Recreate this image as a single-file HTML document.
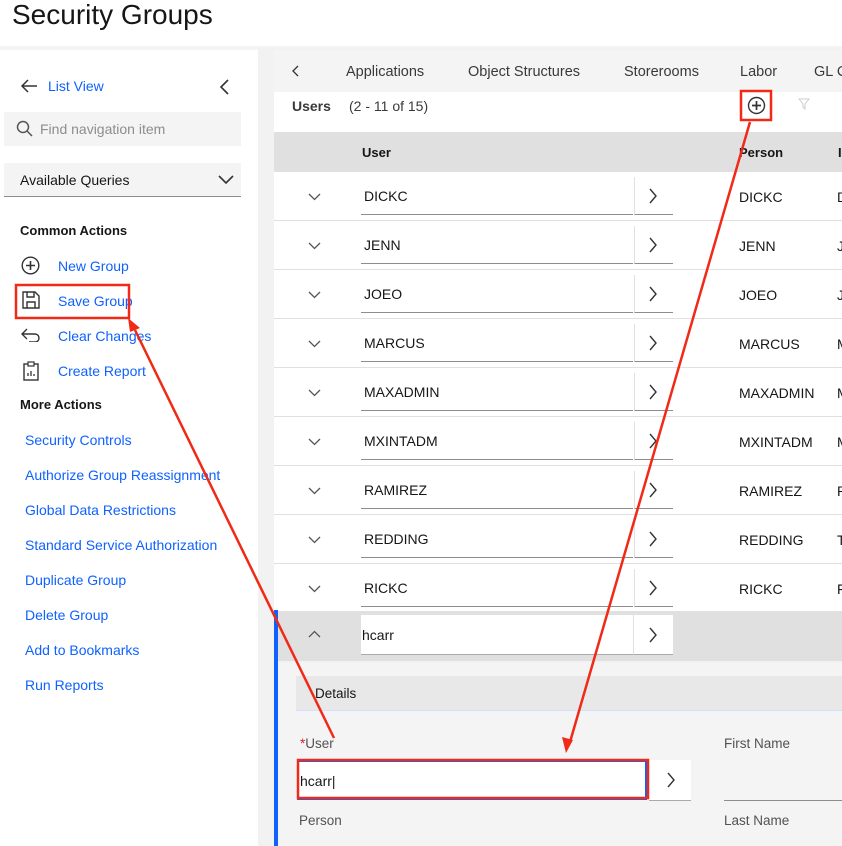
<!DOCTYPE html>
<html><head><meta charset="utf-8"><style>
*{margin:0;padding:0;box-sizing:border-box}
body{width:842px;height:846px;overflow:hidden;background:#fff;font-family:"Liberation Sans",sans-serif;position:relative;color:#161616}
.a{position:absolute;white-space:nowrap}
.lnk{color:#0f62fe;font-size:14px;position:absolute;white-space:nowrap}
.row{position:absolute;left:274px;width:568px;height:49px;background:#fff;border-bottom:1px solid #e0e0e0}
.row .chev{position:absolute;left:34px;top:21px}
.row .inp{position:absolute;left:87px;top:5px;width:272px;height:38px;border-bottom:1px solid #8d8d8d;font-size:14px;padding:11px 0 0 3px}
.row .btn{position:absolute;left:360px;top:5px;width:39px;height:38px;border-left:1px solid #e0e0e0;border-bottom:1px solid #8d8d8d}
.row .btn svg{position:absolute;left:13px;top:11px}
.row .p{position:absolute;left:465px;top:17px;font-size:14px}
.row .q{position:absolute;left:563px;top:17px;font-size:14px}
</style></head><body>
<div class="a" style="left:12px;top:-1px;font-size:28px;color:#161616">Security Groups</div>
<div class="a" style="left:0;top:46px;width:842px;height:4px;background:#f4f4f4"></div>
<div class="a" style="left:258px;top:48px;width:584px;height:798px;background:#f2f2f2"></div>
<svg class="a" style="left:20px;top:79px" width="18" height="14"><path d="M17 7H2M8 1L2 7l6 6" stroke="#333" stroke-width="1.5" fill="none"/></svg>
<div class="lnk" style="left:48px;top:78px">List View</div>
<svg class="a" style="left:219px;top:79px" width="12" height="16"><path d="M9 1L2 8l7 7" stroke="#333" stroke-width="1.6" fill="none"/></svg>
<div class="a" style="left:4px;top:112px;width:237px;height:34px;background:#f4f4f4"></div>
<svg class="a" style="left:16px;top:120px" width="18" height="18"><circle cx="7" cy="7" r="5.5" stroke="#555" stroke-width="1.5" fill="none"/><path d="M11 11l5 5" stroke="#555" stroke-width="1.5"/></svg>
<div class="a" style="left:40px;top:121px;font-size:14px;color:#8d8d8d">Find navigation item</div>
<div class="a" style="left:4px;top:163px;width:237px;height:34px;background:#f4f4f4;border-bottom:1px solid #8d8d8d"></div>
<div class="a" style="left:20px;top:172px;font-size:14px">Available Queries</div>
<svg class="a" style="left:218px;top:175px" width="16" height="10"><path d="M1 1l7 7 7-7" stroke="#333" stroke-width="1.6" fill="none"/></svg>
<div class="a" style="left:20px;top:223px;font-size:13px;font-weight:bold">Common Actions</div>
<svg class="a" style="left:21px;top:256px" width="19" height="19"><circle cx="9.5" cy="9.5" r="8.3" stroke="#333" stroke-width="1.4" fill="none"/><path d="M9.5 5v9M5 9.5h9" stroke="#333" stroke-width="1.6"/></svg>
<div class="lnk" style="left:58px;top:258px">New Group</div>
<svg class="a" style="left:22px;top:291px" width="18" height="18"><path d="M1 1h12l4 4v12H1z" stroke="#333" stroke-width="1.4" fill="none"/><path d="M5 1v5h7V1M5 17v-6h8v6" stroke="#333" stroke-width="1.4" fill="none"/></svg>
<div class="lnk" style="left:58px;top:293px">Save Group</div>
<svg class="a" style="left:21px;top:328px" width="20" height="14"><path d="M6 1L1 6l5 5M1 6h13a4 4 0 010 8H8" stroke="#333" stroke-width="1.4" fill="none"/></svg>
<div class="lnk" style="left:58px;top:328px">Clear Changes</div>
<svg class="a" style="left:23px;top:361px" width="16" height="20"><rect x="1" y="3" width="14" height="16" stroke="#333" stroke-width="1.4" fill="none"/><rect x="5" y="1" width="6" height="4" fill="#fff" stroke="#333" stroke-width="1.2"/><path d="M5 15v-3M8 15v-5M11 15v-2" stroke="#333" stroke-width="1.3"/></svg>
<div class="lnk" style="left:58px;top:363px">Create Report</div>
<div class="a" style="left:20px;top:397px;font-size:13px;font-weight:bold">More Actions</div>
<div class="lnk" style="left:25px;top:432px">Security Controls</div>
<div class="lnk" style="left:25px;top:467px">Authorize Group Reassignment</div>
<div class="lnk" style="left:25px;top:502px">Global Data Restrictions</div>
<div class="lnk" style="left:25px;top:537px">Standard Service Authorization</div>
<div class="lnk" style="left:25px;top:572px">Duplicate Group</div>
<div class="lnk" style="left:25px;top:607px">Delete Group</div>
<div class="lnk" style="left:25px;top:642px">Add to Bookmarks</div>
<div class="lnk" style="left:25px;top:677px">Run Reports</div>
<div class="a" style="left:274px;top:50px;width:568px;height:42px;background:#f4f4f4"></div>
<svg class="a" style="left:292px;top:65px" width="8" height="12"><path d="M6 1L1 6l5 5" stroke="#333" stroke-width="1.3" fill="none"/></svg>
<div class="a" style="left:346px;top:64px;font-size:14.5px;color:#393939">Applications</div>
<div class="a" style="left:468px;top:64px;font-size:14.5px;color:#393939">Object Structures</div>
<div class="a" style="left:624px;top:64px;font-size:14.5px;color:#393939">Storerooms</div>
<div class="a" style="left:740px;top:64px;font-size:14.5px;color:#393939">Labor</div>
<div class="a" style="left:814px;top:64px;font-size:14.5px;color:#393939">GL C</div>
<div class="a" style="left:274px;top:92px;width:568px;height:40px;background:#fff"></div>
<div class="a" style="left:292px;top:98px;font-size:14px;font-weight:bold;color:#393939">Users</div>
<div class="a" style="left:349px;top:98px;font-size:14px;color:#393939">(2 - 11 of 15)</div>
<svg class="a" style="left:747px;top:96px" width="19" height="19"><circle cx="9.5" cy="9.5" r="8" stroke="#333" stroke-width="1.4" fill="none"/><path d="M9.5 5v9M5 9.5h9" stroke="#333" stroke-width="1.7"/></svg>
<svg class="a" style="left:798px;top:98px" width="14" height="12"><path d="M1 1h10L7 6v5L5 9V6z" stroke="#ccc" fill="none"/></svg>
<div class="a" style="left:274px;top:132px;width:568px;height:40px;background:#e0e0e0"></div>
<div class="a" style="left:362px;top:145px;font-size:13px;font-weight:bold">User</div>
<div class="a" style="left:739px;top:145px;font-size:13px;font-weight:bold">Person</div>
<div class="a" style="left:838px;top:145px;font-size:13px;font-weight:bold">I</div>
<div id="rows"></div>
<div class="a" style="left:274px;top:611px;width:568px;height:50px;background:#e0e0e0"></div>
<svg class="a" style="left:308px;top:630px" width="13" height="8"><path d="M1 7l5.5-5.5L12 7" stroke="#555" stroke-width="1.3" fill="none"/></svg>
<div class="a" style="left:361px;top:615px;width:272px;height:40px;background:#fff;border-bottom:1px solid #aaa;font-size:14px;padding:12px 0 0 1px">hcarr</div>
<div class="a" style="left:633px;top:615px;width:40px;height:40px;background:#fff;border-left:1px solid #e0e0e0;border-bottom:1px solid #aaa"></div>
<svg class="a" style="left:648px;top:627px" width="10" height="16"><path d="M2 1l6 7-6 7" stroke="#333" stroke-width="1.4" fill="none"/></svg>
<div class="a" style="left:278px;top:663px;width:564px;height:183px;background:#f4f4f4"></div>
<div class="a" style="left:296px;top:676px;width:546px;height:35px;background:#e8e8e8;border-bottom:1px solid #d0e2ff"></div>
<div class="a" style="left:315px;top:686px;font-size:13.5px">Details</div>
<div class="a" style="left:274px;top:610px;width:4px;height:236px;background:#0f62fe"></div>
<div class="a" style="left:300px;top:736px;font-size:13.5px;color:#525252"><span style="color:#da1e28">*</span>User</div>
<div class="a" style="left:724px;top:736px;font-size:13.5px;color:#525252">First Name</div>
<div class="a" style="left:297px;top:760px;width:350px;height:40px;background:#fff;border:2px solid #0f62fe;font-size:14px;padding:11px 0 0 1px">hcarr|</div>
<div class="a" style="left:649px;top:760px;width:42px;height:41px;background:#fff;border-bottom:1px solid #aaa"></div>
<svg class="a" style="left:666px;top:772px" width="10" height="16"><path d="M2 1l6 7-6 7" stroke="#333" stroke-width="1.4" fill="none"/></svg>
<div class="a" style="left:724px;top:800px;width:118px;height:1px;background:#8d8d8d"></div>
<div class="a" style="left:299px;top:813px;font-size:13.5px;color:#525252">Person</div>
<div class="a" style="left:724px;top:813px;font-size:13.5px;color:#525252">Last Name</div>
<svg class="a" style="left:0;top:0" width="842" height="846">
<g fill="none" stroke="#f02a16" stroke-width="2.5">
<rect x="16" y="285" width="113" height="33"/>
<rect x="741" y="91" width="30" height="29"/>
<rect x="298" y="760" width="350" height="38"/>
<path d="M334 738L135 330"/>
<path d="M750 122L570 742"/>
</g>
<path d="M128 318l12 10-10 4z" fill="#f02a16"/>
<path d="M566 753l-4-16 11 3z" fill="#f02a16"/>
</svg>
<script>
var n=["DICKC","JENN","JOEO","MARCUS","MAXADMIN","MXINTADM","RAMIREZ","REDDING","RICKC"],
q=["D","J","J","M","M","M","R","T","F"],h="";
for(var i=0;i<9;i++){h+='<div class="row" style="top:'+(172+49*i)+'px"><svg class="chev" width="13" height="8"><path d="M1 1l5.5 5.5L12 1" stroke="#555" stroke-width="1.3" fill="none"/></svg><div class="inp">'+n[i]+'</div><div class="btn"><svg width="10" height="16"><path d="M2 1l6 7-6 7" stroke="#333" stroke-width="1.4" fill="none"/></svg></div><div class="p">'+n[i]+'</div><div class="q">'+q[i]+'</div></div>';}
document.getElementById("rows").innerHTML=h;
</script>
</body></html>
